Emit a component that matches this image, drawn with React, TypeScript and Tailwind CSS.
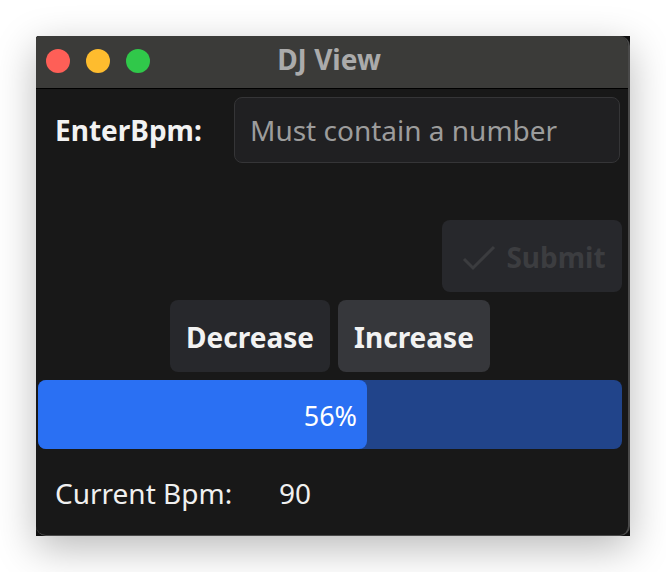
import React from "react";

export default function App() {
  const pct = 56;
  return (
    <div
      className="w-[666px] h-[572px] bg-white pt-[36px] pl-[36px]"
      style={{ fontFamily: '"Noto Sans", "Open Sans", sans-serif' }}
    >
      <div className="w-[594px] h-[500px] bg-[#0f0f0f] rounded-tl-[3px] shadow-[0_12px_40px_rgba(0,0,0,0.28)]">
        <div className="w-full h-full flex flex-col overflow-hidden rounded-[10px] rounded-tl-[3px] border-r-2 border-b border-[#4a4a4a] bg-[#181818]">
          {/* Title bar */}
          <div className="h-[53px] shrink-0 grid grid-cols-[1fr_auto_1fr] items-center bg-[#3b3b39] border-b border-black">
            <div className="flex items-center gap-[16px] pl-[10px] pb-[3px]">
              <div className="w-[24px] h-[24px] rounded-full bg-[#fe5f57]" />
              <div className="w-[24px] h-[24px] rounded-full bg-[#febc2e]" />
              <div className="w-[24px] h-[24px] rounded-full bg-[#30c84a]" />
            </div>
            <div className="text-[28px] font-bold text-[#ababab] leading-none pb-[6px] pr-[6px]">
              DJ View
            </div>
            <div />
          </div>

          {/* Body */}
          <div className="flex flex-col pl-[2px] pr-[6px] pt-[8px]">
            <div className="flex items-center h-[66px] pr-[2px]">
              <div className="w-[196px] pl-[17px] text-[28px] font-bold text-[#f2f2f2] leading-none">
                EnterBpm:
              </div>
              <div className="flex-1 h-full flex items-center rounded-[8px] border border-[#353537] bg-[#202022] pl-[15px]">
                <span className="text-[28px] text-[#9c9c9c] leading-none">
                  Must contain a number
                </span>
              </div>
            </div>

            <div className="flex justify-end mt-[57px]">
              <div className="w-[180px] h-[72px] rounded-[8px] bg-[#27282c] flex items-center justify-center gap-[8px] pl-[4px]">
                <svg width="36" height="30" viewBox="0 0 36 30" className="mt-[3px]">
                  <polyline
                    points="2,16 11,25 32,4"
                    fill="none"
                    stroke="#3b3c3f"
                    strokeWidth="3"
                  />
                </svg>
                <span className="text-[28px] font-bold text-[#3c3d40] leading-none mt-[2px]">
                  Submit
                </span>
              </div>
            </div>

            <div className="flex justify-center gap-[8px] mt-[8px]">
              <div className="w-[160px] h-[72px] rounded-[8px] bg-[#27282c] flex items-center justify-center">
                <span className="text-[28px] font-bold text-[#f2f2f2] leading-none mt-[2px]">
                  Decrease
                </span>
              </div>
              <div className="w-[152px] h-[72px] rounded-[8px] bg-[#36373b] flex items-center justify-center">
                <span className="text-[28px] font-bold text-[#f2f2f2] leading-none mt-[2px]">
                  Increase
                </span>
              </div>
            </div>

            <div className="mt-[8px] h-[69px] rounded-[8px] bg-[#21448a] flex">
              <div
                className="h-full rounded-[8px] bg-[#2a70f3] flex items-center justify-end"
                style={{ width: `${pct * 5.84 + 2}px` }}
              >
                <span className="text-[27px] text-white leading-none pr-[10px] mt-[1px]">
                  {pct}%
                </span>
              </div>
            </div>

            <div className="h-[87px] flex items-center pl-[17px]">
              <span className="w-[224px] text-[28px] text-[#f0f0f0] leading-none">
                Current Bpm:
              </span>
              <span className="text-[28px] text-[#f0f0f0] leading-none">90</span>
            </div>
          </div>
        </div>
      </div>
    </div>
  );
}
